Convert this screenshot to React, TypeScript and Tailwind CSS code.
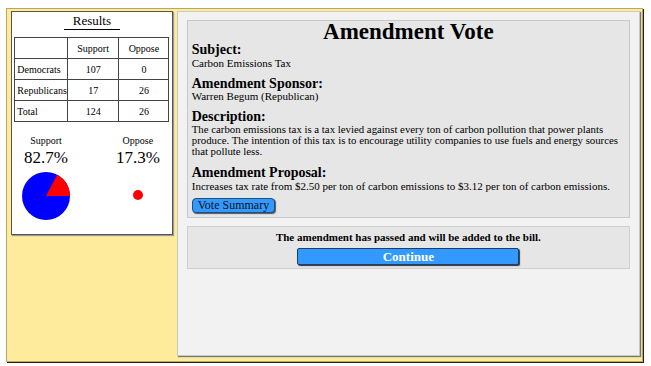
import React from 'react';

const serif = { fontFamily: "'Liberation Serif', 'DejaVu Serif', serif" };

function Pie() {
  // 82.7% blue, 17.3% red wedge starting at 3 o'clock going counterclockwise
  const r = 24;
  const a = 0.173 * 2 * Math.PI;
  const x = 25 + r * Math.cos(-a);
  const y = 25 + r * Math.sin(-a);
  return (
    <svg width="50" height="50" viewBox="0 0 50 50">
      <circle cx="25" cy="25" r={r} fill="#0000ff" />
      <path d={`M25 25 L${25 + r} 25 A${r} ${r} 0 0 0 ${x} ${y} Z`} fill="#ff0000" />
    </svg>
  );
}

export default function App() {
  const rows = [
    ['Democrats', '107', '0'],
    ['Republicans', '17', '26'],
    ['Total', '124', '26'],
  ];

  return (
    <div className="w-[651px] h-[366px] bg-white overflow-hidden" style={serif}>
      <div className="ml-[6px] mt-[8px] w-[637px] h-[354px] bg-[#feec9c] border border-[#b8a860] shadow-[1px_1px_0_#222] flex gap-[4px] pl-[4px] pt-[2px] pr-[2px]">
        {/* Results panel */}
        <div className="w-[162px] h-[224px] bg-white border border-[#555] shadow-[1px_1px_1px_#999] flex flex-col items-center pt-[1px]">
          <div className="text-[13px] text-black leading-[16px] border-b border-black px-[9px]">Results</div>
          <table className="mt-[7px] w-[155px] border-collapse text-[10px] text-black">
            <tbody>
              <tr className="h-[21px]">
                <td className="border border-[#444] w-[52px]"></td>
                <td className="border border-[#444] text-center">Support</td>
                <td className="border border-[#444] text-center">Oppose</td>
              </tr>
              {rows.map(r => (
                <tr key={r[0]} className="h-[21px]">
                  <td className="border border-[#444] pl-[2px]">{r[0]}</td>
                  <td className="border border-[#444] text-center">{r[1]}</td>
                  <td className="border border-[#444] text-center">{r[2]}</td>
                </tr>
              ))}
            </tbody>
          </table>
          <div className="w-full flex mt-[13px] text-black">
            <div className="w-[68px] flex flex-col items-center">
              <div className="text-[10px] leading-[12px]">Support</div>
              <div className="text-[17px] leading-[20px] mt-[1px]">82.7%</div>
              <div className="mt-[3px]"><Pie /></div>
            </div>
            <div className="flex-1 flex flex-col items-center pl-[24px]">
              <div className="text-[10px] leading-[12px]">Oppose</div>
              <div className="text-[17px] leading-[20px] mt-[1px]">17.3%</div>
              <div className="mt-[22px] w-[10px] h-[10px] rounded-full bg-[#ff0000]" />
            </div>
          </div>
        </div>

        {/* Amendment panel */}
        <div className="w-[464px] h-[345px] bg-[#f2f2f2] border border-[#c8c8c8] shadow-[1px_1px_1px_#777] px-[9px] pt-[8px]">
          <div className="h-[198px] bg-[#e6e6e6] border border-[#c8c8c8] px-[4px] text-black">
            <div className="text-center font-bold text-[23px] leading-[22px]">Amendment Vote</div>
            <div className="font-bold text-[14px] leading-[14px]">Subject:</div>
            <div className="text-[11px] leading-[12px]">Carbon Emissions Tax</div>
            <div className="font-bold text-[14px] leading-[14px] mt-[8px]">Amendment Sponsor:</div>
            <div className="text-[11px] leading-[11px]">Warren Begum (Republican)</div>
            <div className="font-bold text-[14px] leading-[14px] mt-[8px]">Description:</div>
            <div className="text-[10.8px] leading-[11px]">
              The carbon emissions tax is a tax levied against every ton of carbon pollution that power plants<br />
              produce. The intention of this tax is to encourage utility companies to use fuels and energy sources<br />
              that pollute less.
            </div>
            <div className="font-bold text-[14px] leading-[14px] mt-[9px]">Amendment Proposal:</div>
            <div className="text-[11px] leading-[12px]">Increases tax rate from $2.50 per ton of carbon emissions to $3.12 per ton of carbon emissions.</div>
            <button className="mt-[5px] h-[15px] px-[5px] bg-[#3399ff] border border-[#1a4f8a] rounded-[4px] text-[12px] leading-[12px] text-[#111] shadow-[1px_1px_1px_#555]">
              Vote Summary
            </button>
          </div>
          <div className="mt-[8px] h-[43px] bg-[#e6e6e6] border border-[#cfcfcf] flex flex-col items-center text-black">
            <div className="font-bold text-[11px] leading-[12px] mt-[4px]">The amendment has passed and will be added to the bill.</div>
            <button className="mt-[5px] w-[222px] h-[17px] bg-[#3399ff] border border-[#1a3f6a] rounded-[2px] text-white font-bold text-[13px] leading-[14px] shadow-[1px_1px_1px_#333]">
              Continue
            </button>
          </div>
        </div>
      </div>
    </div>
  );
}
